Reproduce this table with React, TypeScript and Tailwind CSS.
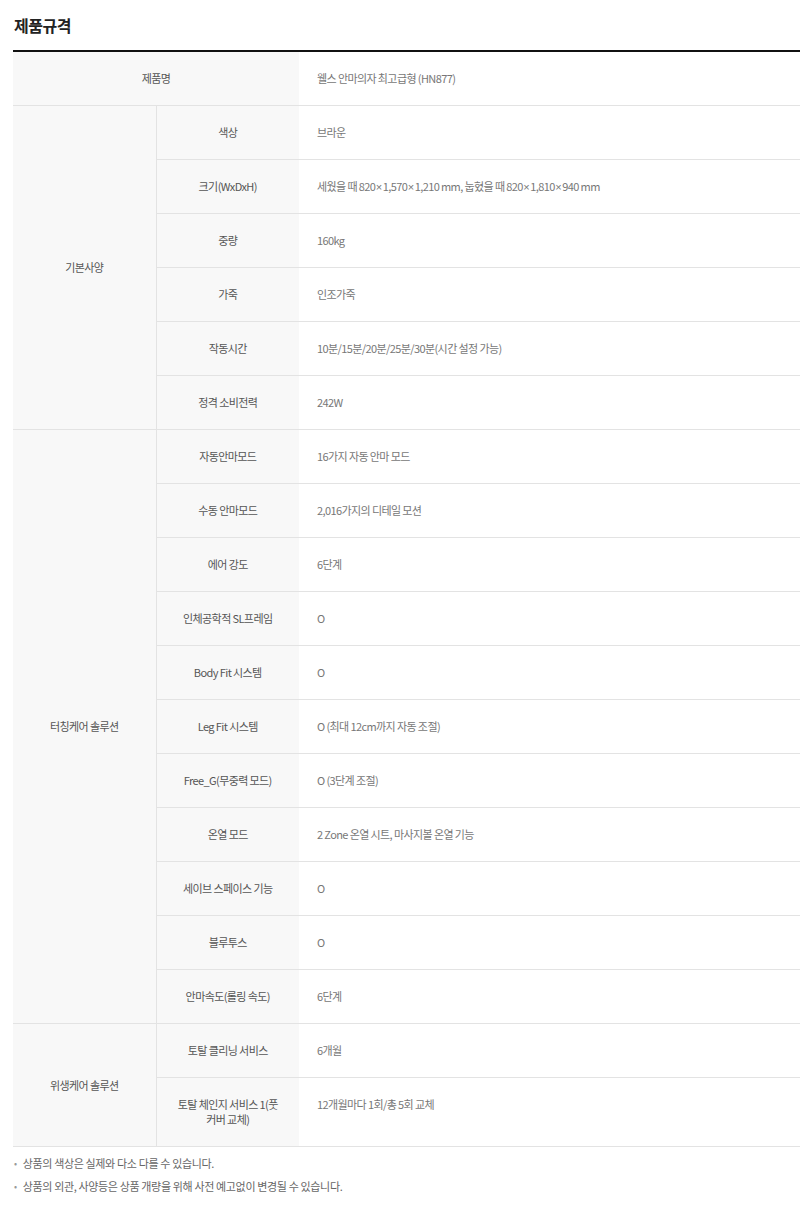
import React from 'react';

type Row = { label: string; value: string };
type Group = { title: string; rows: Row[] };

const groups: Group[] = [
    {
        title: '기본사양',
        rows: [
            { label: '색상', value: '브라운' },
            { label: '크기(WxDxH)', value: '세웠을 때 820×1,570×1,210 mm, 눕혔을 때 820×1,810×940 mm' },
            { label: '중량', value: '160kg' },
            { label: '가죽', value: '인조가죽' },
            { label: '작동시간', value: '10분/15분/20분/25분/30분(시간 설정 가능)' },
            { label: '정격 소비전력', value: '242W' },
        ],
    },
    {
        title: '터칭케어 솔루션',
        rows: [
            { label: '자동안마모드', value: '16가지 자동 안마 모드' },
            { label: '수동 안마모드', value: '2,016가지의 디테일 모션' },
            { label: '에어 강도', value: '6단계' },
            { label: '인체공학적 SL프레임', value: 'O' },
            { label: 'Body Fit 시스템', value: 'O' },
            { label: 'Leg Fit 시스템', value: 'O (최대 12cm까지 자동 조절)' },
            { label: 'Free_G(무중력 모드)', value: 'O (3단계 조절)' },
            { label: '온열 모드', value: '2 Zone 온열 시트, 마사지볼 온열 기능' },
            { label: '세이브 스페이스 기능', value: 'O' },
            { label: '블루투스', value: 'O' },
            { label: '안마속도(롤링 속도)', value: '6단계' },
        ],
    },
    {
        title: '위생케어 솔루션',
        rows: [
            { label: '토탈 클리닝 서비스', value: '6개월' },
            { label: '토탈 체인지 서비스 1(풋 커버 교체)', value: '12개월마다 1회/총 5회 교체' },
        ],
    },
];

const notes = [
    '상품의 색상은 실제와 다소 다를 수 있습니다.',
    '상품의 외관, 사양등은 상품 개량을 위해 사전 예고없이 변경될 수 있습니다.',
];

const cell = 'py-[19px] leading-[15px] border-b border-[#e3e3e3]';

// the x sign is narrow in the reference, the CJK one is full width
function Value({ text }: { text: string }) {
    const parts = text.split('×');
    return (
        <>
            {parts.map((p, i) => (
                <React.Fragment key={i}>
                    {i > 0 && (
                        <span className="font-['Liberation_Sans',sans-serif] tracking-normal leading-[0] px-[0.5px]">×</span>
                    )}
                    {p}
                </React.Fragment>
            ))}
        </>
    );
}

export default function App() {
    return (
        <div className="w-[800px] bg-white pl-[13px] text-[11px] font-['Noto_Sans_CJK_KR',sans-serif] tracking-[-0.6px]">
            <div className="h-[50px] flex items-center pl-px">
                <h2 className="text-[16px] font-bold text-[#222] tracking-[-0.5px]">제품규격</h2>
            </div>
            <table className="w-[787px] border-collapse table-fixed border-t-2 border-[#111]">
                <colgroup>
                    <col className="w-[143px]" />
                    <col className="w-[143px]" />
                    <col />
                </colgroup>
                <tbody>
                    <tr>
                        <th colSpan={2} className={`${cell} bg-[#f8f8f8] font-normal text-[#555] text-center`}>
                            제품명
                        </th>
                        <td className={`${cell} pl-[18px] text-[#777]`}>웰스 안마의자 최고급형 (HN877)</td>
                    </tr>
                    {groups.map((g) =>
                        g.rows.map((r, i) => (
                            <tr key={g.title + r.label}>
                                {i === 0 && (
                                    <th
                                        rowSpan={g.rows.length}
                                        className="bg-[#f8f8f8] font-normal text-[#555] text-center border-b border-r border-[#e3e3e3]"
                                    >
                                        {g.title}
                                    </th>
                                )}
                                <th className={`${cell} bg-[#f8f8f8] font-normal text-[#555] text-center px-[16px]`}>
                                    {r.label}
                                </th>
                                <td className={`${cell} pl-[18px] text-[#777] align-top`}>
                                    <Value text={r.value} />
                                </td>
                            </tr>
                        ))
                    )}
                </tbody>
            </table>
            <ul className="mt-[5px] pl-px">
                {notes.map((n) => (
                    <li key={n} className="flex items-center leading-[23px] text-[#666] text-[11px] tracking-[-0.35px]">
                        <span className="text-[#999] mr-[6px] text-[9px]">•</span>
                        {n}
                    </li>
                ))}
            </ul>
        </div>
    );
}
